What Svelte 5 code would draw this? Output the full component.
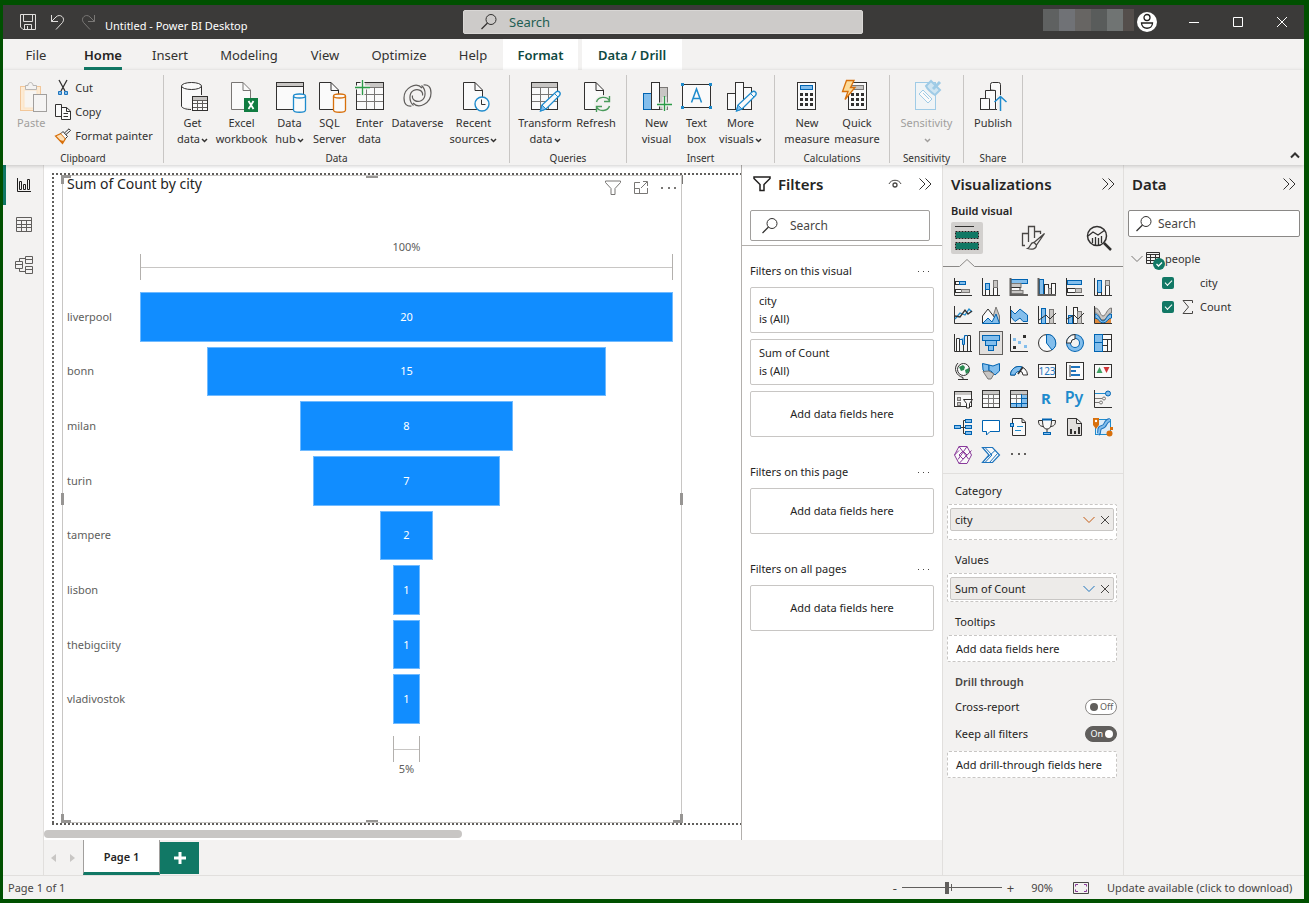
<script lang="ts">
  interface RibbonItem {
    icon: string;
    lines: string[];
    width: number;
    menu?: boolean;
    disabled?: boolean;
  }

  interface RibbonGroup {
    name: string;
    width: number;
    items: RibbonItem[];
  }

  const dark = "#323130";
  const blue = "#0063b1";
  const lightBlue = "#83beec";
  const gray = "#797775";
  const lightGray = "#c8c6c4";

  function box(x: number, y: number, w: number, h: number, fill = "#fafafa", stroke = dark): string {
    return `<rect x="${x}" y="${y}" width="${w}" height="${h}" fill="${fill}" stroke="${stroke}"/>`;
  }

  function line(d: string, stroke = dark, fill = "none", width = 1): string {
    return `<path d="${d}" stroke="${stroke}" fill="${fill}" stroke-width="${width}"/>`;
  }

  const page = (stroke = dark) =>
    line("M5.5 2.5H17L24.5 10V29.5H5.5Z", stroke, "#fafafa") + line("M17 2.5V10.5H24.5", stroke);
  const cylinder = (x: number, y: number, color: string) =>
    line(
      `M${x} ${y}V${y + 14}C${x} ${y + 17} ${x + 12} ${y + 17} ${x + 12} ${y + 14}V${y}`,
      color,
      "#fafafa",
      1.3,
    ) + `<ellipse cx="${x + 6}" cy="${y}" rx="6" ry="2" fill="#fafafa" stroke="${color}" stroke-width="1.3"/>`;
  const pencil =
    line("M11.5 31L13 25L27 12C29.5 10 32.5 13 30.5 15.5L17 29Z", "#1e8bcd", "#fafafa", 1.3) +
    line("M11.5 31L13 25L17 29Z", "#1e8bcd", lightBlue) +
    line("M25.5 13.5L29 17", "#1e8bcd");
  const axes = line("M.5 0V17.5H18");
  const keypad = (x: number) => {
    let dots = "";
    for (const row of [13, 18, 23]) {
      for (const col of [3, 8, 13]) {
        dots += `<rect x="${x + col}" y="${row}" width="3" height="3" fill="${dark}"/>`;
      }
    }
    return dots;
  };

  const ribbonIcons: Record<string, string> = {
    paste:
      box(5.5, 6.5, 20, 24, "#fdebd3", "#f2c79a") +
      box(9, 10, 13, 18, "#f7f5f2", "#fbe3c5") +
      line("M10.5 9.5V5.5H13C13 1.5 18 1.5 18 5.5H21.5V9.5Z", "#b8b6b4", "#f3f2f1") +
      box(18.5, 14.5, 13, 17, "#f5f4f3", "#a19f9d"),
    getData:
      `<rect x="5" y="6" width="19" height="21" fill="#fafafa"/>` +
      line("M4.5 6V26C4.5 28 9 29.5 14 29.5M24.5 6V15") +
      `<ellipse cx="14.5" cy="6" rx="10" ry="3.5" fill="#fafafa" stroke="${dark}"/>` +
      box(15.5, 16.5, 15, 14) + `<rect x="16" y="17" width="14" height="3" fill="${lightGray}"/>` +
      line("M16 20.5H30M16 23.5H30M16 27.5H30M20.5 20V30M25.5 20V30", "#605e5c"),
    excel:
      page(gray) + `<rect x="18" y="18" width="14" height="14" fill="#107c41"/>` +
      line("M22.5 21L27.5 29M27.5 21L22.5 29", "#fff", "none", 1.8),
    hub:
      box(2.5, 2.5, 27, 27) + `<rect x="3" y="3" width="26" height="4" fill="${lightGray}"/>` +
      line("M3 6.5H29") + cylinder(19.5, 16, "#1e8bcd"),
    sql: page() + cylinder(19.5, 16, "#d8700c"),
    enter:
      box(2.5, 2.5, 27, 27) + `<rect x="11" y="3" width="18" height="4" fill="${lightGray}"/>` +
      line("M3 14.5H29M3 21.5H29M12.5 7V29M20.5 7V29M3 7.5H29", gray) +
      line("M0 7.5H16M8.5 0V16", "#f3f2f1", "none", 4) +
      line("M1 7.5H16M8.5 0V15", "#2b9b47", "none", 1.3),
    dataverse: ["", ` transform="rotate(180 15.5 15.5)"`]
      .map(
        (turn) =>
          `<path${turn} d="M20 8C14 1.500 2 8 2 18C2 24.500 5 26.500 9.500 26M11.500 25.500C6.500 21 7 13 11.500 10.500C16 8 21.500 11 20.500 15.500" fill="none" stroke="#605e5c" stroke-width="1.2"/>`,
      )
      .join(""),
    recent:
      page() + `<circle cx="24" cy="24" r="7" fill="#fafafa" stroke="#1e8bcd" stroke-width="1.4"/>` +
      line("M23.5 19.5V24.5H27.5"),
    transform:
      box(2.5, 2.5, 26, 27) + `<rect x="3" y="3" width="25" height="4" fill="${lightGray}"/>` +
      line("M3 7.5H28M3 14.5H28M3 21.5H28M11.5 7V29M19.5 7V29", gray) + pencil,
    refresh:
      line("M4.5 2.5H16L23.5 10V29.5H4.5Z", dark, "#fafafa") + line("M16 2.5V10.5H23.5") +
      `<circle cx="23" cy="24" r="9" fill="#f3f2f1"/>` +
      line("M16.5 22C18 16.5 27 15.5 29.5 21M29.5 16V21.5H24M29.5 26C28 31.5 19 32 16.5 27M16.5 32V26.5H22", "#4a9b5c", "none", 1.4),
    newVisual:
      box(2.5, 13.5, 8, 16, lightBlue, blue) + box(18.5, 7.5, 8, 22, lightGray, gray) + box(10.5, 2.5, 8, 27) +
      line("M17 24.5H31M23.5 17V31", "#f3f2f1", "none", 4) + line("M16 24.5H31M23.5 16V31", "#2b9b47", "none", 1.3),
    textBox:
      box(1.5, 4.5, 28, 23) + line("M10.5 22.5L15.5 9L20.5 22.5M12 18.5H19", "#1e8bcd", "none", 1.5) +
      `<path d="M0 3h3v3h-3zM28 3h3v3h-3zM0 26h3v3h-3zM28 26h3v3h-3z" fill="#1e8bcd"/>`,
    moreVisuals: box(2.5, 13.5, 8, 16) + box(18.5, 7.5, 8, 22) + box(10.5, 2.5, 8, 27) + pencil,
    calc: box(6.5, 2.5, 18, 27) + box(9.5, 5.5, 12, 4, lightBlue, blue) + keypad(6),
    quick:
      box(7.5, 2.5, 18, 27) + box(10.5, 5.5, 12, 4, lightGray, gray) + keypad(7) +
      line("M5.5 .5H13L9.5 7.5H14L4 19.5L7 11.5H1.5Z", "#d8700c", "#fddc9a", 1.3),
    sensitivity:
      box(4.5, 2.5, 20, 27, "#f0f4f6", "#9fcbe6") + line("M8 14L12 10L21 19L17 23Z", "#9fcbe6", "#fafafa") +
      line("M12 13L18 19", "#9fcbe6") + line("M15 6L20 1L29 10L24 15C21 13 17 10 15 6Z", "#9fcbe6", "#cfe5f2", 2) +
      line("M22 9L29 2", "#9fcbe6", "none", 3),
    publish:
      box(3.5, 18.5, 9, 11) + line("M8.5 18V10.5H18.5V29.5H12.5V18.5", dark, "#fafafa") +
      line("M13.5 10V4.5Q13.5 2.5 15.5 2.5H21.5Q23.5 2.5 23.5 4.5V29.5H18.5V10.5Z", dark, "#fafafa") +
      `<rect x="20" y="15" width="7" height="17" fill="#f3f2f1"/>` +
      line("M23.5 31V17M17.5 22L23.5 16.5L29.5 22", "#1e8bcd", "none", 1.5),
  };

  const ribbon: RibbonGroup[] = [
    {
      name: "Data",
      width: 346,
      items: [
        { icon: "getData", lines: ["Get", "data"], width: 42, menu: true },
        { icon: "excel", lines: ["Excel", "workbook"], width: 56 },
        { icon: "hub", lines: ["Data", "hub"], width: 40, menu: true },
        { icon: "sql", lines: ["SQL", "Server"], width: 40 },
        { icon: "enter", lines: ["Enter", "data"], width: 40 },
        { icon: "dataverse", lines: ["Dataverse"], width: 56 },
        { icon: "recent", lines: ["Recent", "sources"], width: 56, menu: true },
      ],
    },
    {
      name: "Queries",
      width: 117,
      items: [
        { icon: "transform", lines: ["Transform", "data"], width: 56, menu: true },
        { icon: "refresh", lines: ["Refresh"], width: 46 },
      ],
    },
    {
      name: "Insert",
      width: 148,
      items: [
        { icon: "newVisual", lines: ["New", "visual"], width: 40 },
        { icon: "textBox", lines: ["Text", "box"], width: 40 },
        { icon: "moreVisuals", lines: ["More", "visuals"], width: 48, menu: true },
      ],
    },
    {
      name: "Calculations",
      width: 115,
      items: [
        { icon: "calc", lines: ["New", "measure"], width: 50 },
        { icon: "quick", lines: ["Quick", "measure"], width: 50 },
      ],
    },
    {
      name: "Sensitivity",
      width: 74,
      items: [{ icon: "sensitivity", lines: ["Sensitivity", ""], width: 58, menu: true, disabled: true }],
    },
    { name: "Share", width: 59, items: [{ icon: "publish", lines: ["Publish"], width: 44 }] },
  ];

  const tabs = [
    { label: "File", width: 66 },
    { label: "Home", width: 68 },
    { label: "Insert", width: 66 },
    { label: "Modeling", width: 92 },
    { label: "View", width: 60 },
    { label: "Optimize", width: 88 },
    { label: "Help", width: 60 },
    { label: "Format", width: 75, context: true },
    { label: "Data / Drill", width: 100, context: true },
  ];

  const grid = line("M1 4.5H17M1 8.5H17M1 13.5H17M6.5 4V17M11.5 4V17", gray);

  const visuals = [
    // bars and columns
    axes + box(1.5, 3.5, 4, 3) + box(5.5, 3.5, 6, 3, lightBlue, blue) + box(1.5, 11.5, 6, 3) + box(7.5, 11.5, 8, 3, lightGray, gray),
    axes + box(3.5, 11.5, 4, 6) + box(3.5, 5.5, 4, 6, lightBlue, blue) + box(11.5, 9.5, 4, 8) + box(11.5, 2.5, 4, 7, lightGray, gray),
    box(1, 1.5, 16.5, 4, lightBlue, blue) + box(1, 5.5, 10, 4, lightGray, gray) + box(1, 9.5, 9, 3) + box(1, 12.5, 12, 3, lightGray, gray) + line("M.5 0V17H18", "#605e5c", "none", 2),
    box(1.5, 1.5, 4, 15, lightBlue, blue) + box(6.5, 6.5, 4, 10) + box(10.5, 10.5, 3, 6, lightGray, gray) + box(13.5, 5.5, 4, 11) + line("M.5 0V17H18", "#605e5c", "none", 2),
    axes + box(1.5, 2.5, 14, 4, lightBlue, blue) + box(1.5, 10.5, 8, 4) + box(9.5, 10.5, 6, 4, lightGray, gray),
    axes + box(3.5, 2.5, 4, 12, lightBlue, blue) + line("M3.5 14V17M7.5 14V17") + box(11.5, 7.5, 4, 10) + box(11.5, 2.5, 4, 5, lightGray, gray),
    // lines and areas
    axes + line("M1 13L6 7L11 9L15 3L18 6", "#1e8bcd", "none", 1.3) + line("M1 10L6 11L11 4L14 8L18 5", dark, "none", 1.3),
    line("M9 17L14 1L17.5 10V17Z", gray, lightGray) + line("M.5 17V10L6 3L13 12V17Z", dark, "#fafafa") + line("M.5 17.5L6 12L10 16L14 8L17.5 17.5Z", blue, lightBlue),
    line("M1 4L5 8L10 3L17.5 9V15.5H13L10 12L5 15.5L1 11Z", blue, lightBlue) + axes,
    axes + box(3.5, 2.5, 4, 15, lightBlue, blue) + box(11.5, 3.5, 4, 14, lightGray, gray) + line("M1 14L8 9L12 13L18 7"),
    axes + box(2.5, 9.5, 4, 8, lightBlue, blue) + box(7.5, 1.5, 4, 16) + box(11.5, 5.5, 4, 12, lightGray, gray) + line("M1 13L8 9L12 13L18 7"),
    `<path d="M1 11H17V17H1Z" fill="#e08a3c"/>` + line("M1 2C6 2 6 10 9 10S13 2 17.5 2V7C13 7 13 14 9 14S6 7 1 7Z", gray, lightGray) + line("M1 8C5 8 6 15 9 15S13 8 17.5 8V12C14 12 13 17 9 17S5 12 1 12Z", blue, lightBlue) + axes,
    // ribbon, funnel, scatter and parts of a whole
    line("M2.5 17V4.5H5.5V17M9.5 17V10.5M13.5 17V1.5H16.5V17", dark, "#fafafa") + line("M5.5 5.5H8.5V10.5H10.5V1.5H13.5", blue, lightBlue) + axes,
    box(.5, 1.5, 17, 5, lightBlue, blue) + box(3.5, 6.5, 11, 5, lightBlue, blue) + box(6.5, 11.5, 5, 5, lightBlue, blue),
    axes + `<path d="M13 1h3v3h-3zM3 12h3v3h-3z" fill="${dark}"/><path d="M3 4h3v3h-3zM8 7h3v3h-3zM14 11h3v3h-3z" fill="${lightBlue}"/>`,
    `<circle cx="9" cy="9" r="8.5" fill="#fafafa" stroke="${dark}"/>` + line("M8.5 .5A8.5 8.5 0 0 1 14 16L8.5 9Z", blue, lightBlue),
    `<circle cx="9" cy="9" r="6.5" fill="none" stroke="${blue}" stroke-width="5"/><circle cx="9" cy="9" r="6.5" fill="none" stroke="${lightBlue}" stroke-width="3"/>` + line("M.5 9A8.5 8.5 0 0 1 9 .5V5A4 4 0 0 0 5 9Z", dark, "#fafafa"),
    box(.5, .5, 17, 17) + box(.5, .5, 8, 8, lightBlue, blue) + box(.5, 8.5, 8, 9, lightBlue, blue) + line("M8.5 5.5H17.5M13.5 5.5V17.5M8.5 11.5H13"),
    // maps, gauges and cards
    `<circle cx="9.5" cy="7.5" r="6" fill="#fafafa" stroke="${dark}"/><path d="M5 5l4-2 2 2-1 3-3 1zM11 8l4-2v4l-3 2z" fill="#2b8a52"/>` + line("M4 1C-1 6 2 14 9 15.5V17.5M4 17.5H14"),
    line("M.5 1.5L7 3V9L10 11L8 15L4 11L1 8Z", blue, lightBlue) + line("M7 3L11 4L17.5 1.5V9L13 13L9 9H7Z", blue, lightBlue) + line("M1 9.5L7 9L12 12L9 17H6Z", gray, lightGray),
    line("M.5 13A8.5 8.5 0 0 1 17.5 13H13A4 4 0 0 0 5 13Z", dark, "#fafafa") + line("M.5 13A8.5 8.5 0 0 1 12 5L9.5 9.5A4 4 0 0 0 5 13Z", blue, lightBlue) + line("M8 12L13 5", dark, "none", 1.5),
    box(.5, 2.5, 17, 13) + `<text x="9" y="13" text-anchor="middle" font-size="10" fill="#1e74bd">123</text>`,
    box(.5, .5, 17, 17) + line("M4 3V15") + line("M5 5H14M5 9H10M5 13H14", "#1e74bd", "none", 2),
    box(.5, 2.5, 17, 13) + `<path d="M2.500 11L5.500 5L8.500 11Z" fill="#3fa162"/><path d="M9.500 5H15.500L12.500 11Z" fill="#d13438"/>`,
    // slicer, tables and scripts
    box(.5, 1.5, 17, 15) + `<rect x="1" y="2" width="16" height="3" fill="${lightGray}"/>` + box(3.5, 7.5, 3, 3, lightGray, gray) + box(3.5, 12.5, 3, 3, lightGray, gray) + line("M9.5 9.5H18.5L15.5 13.5V18H12.5V13.5Z", dark, "#fafafa"),
    box(.5, .5, 17, 17) + `<rect x="1" y="1" width="16" height="3" fill="${lightGray}"/>` + grid,
    box(.5, .5, 17, 17) + `<rect x="1" y="1" width="16" height="3" fill="${lightGray}"/><path d="M12 4h5v13H1v-4h11z" fill="${lightBlue}"/>` + grid + line("M1 13.5H17M11.5 4V17M6.5 13V17M12 8.5H17", blue),
    `<text x="8" y="14" text-anchor="middle" font-size="15" font-weight="700" fill="#1e8bcd">R</text>`,
    `<text x="8" y="13" text-anchor="middle" font-size="16" font-weight="600" fill="#1e8bcd">Py</text>`,
    axes + line("M1 3.5H12", "#1e8bcd") + `<circle cx="14" cy="3.5" r="2.5" fill="${lightBlue}" stroke="${blue}"/>` + line("M1 8.5H8M1 12.5H5", gray) + `<circle cx="10" cy="8.5" r="1.5" fill="none" stroke="${gray}"/><circle cx="7" cy="12.5" r="1.5" fill="none" stroke="${gray}"/>`,
    // narrative and report visuals
    line("M6 9.5H9M9.5 2.5V15.5M9.5 2.5H12M9 9.5H12M9.5 15.5H12") + box(.5, 7.5, 6, 3, lightBlue, blue) + box(11.5, 1.5, 6, 3, lightBlue, blue) + box(11.5, 7.5, 6, 3, lightBlue, blue) + box(11.5, 13.5, 6, 3, lightBlue, blue),
    line("M.5 2.5H17.5V13.5H8L4.5 17V13.5H.5Z", blue, "#fff"),
    line("M2.5 5V.5H12L15.5 4V17.5H2.5V9M12 .5V4.5H15.5", dark, "#fafafa") + box(.5, 5.5, 3, 3, lightBlue, blue) + line("M7 8.5H13M5 12.5H11", "#1e8bcd"),
    line("M4 2.5H.5C.5 7 2 8 5 8.5M13 2.5H17.5C17.5 7 16 8 13 8.5") + line("M4.5 1.5H13.5C13.5 9 12 11 9 11S4.5 9 4.5 1.5M9 11V15", dark, "#fafafa") + line("M4 1.5H14", blue, "none", 2) + box(5.5, 14.5, 7, 2, lightBlue, blue),
    line("M1.5 .5H10.5L15.5 5V17.5H1.5ZM10.5 .5V5.5H15.5", dark, "#e1dfdd") + `<path d="M4 11h2v5h-2zM8 13h2v3h-2zM12 9h2v7h-2z" fill="${dark}"/>`,
    box(1.5, 1.5, 15, 15, "#dcecf8", "#1e8bcd") + line("M16 2C10 3 13 8 8 9S7 14 4 16", "#1e74bd", "none", 4) + line("M16 2C10 3 13 8 8 9S7 14 4 16", lightBlue, "none", 2) + `<path d="M-1 0h6v7l-3 4-3-4z" fill="#d8700c"/><circle cx="2" cy="3" r="1.200" fill="#fff"/><circle cx="15.500" cy="15.500" r="3" fill="#d8700c"/><rect x="16" y="9" width="3" height="3" fill="#d8700c"/>`,
    line("M5 .5H13L17.5 9L13 17.5H5L.5 9Z", "#8a3a9b", "#fafafa") + line("M5 .5L14.5 13M4 13.5L13 .5M.5 9L5 4.5M5 17.5L17.5 4.5M9 5L13 9L9 13L5 9Z", "#8a3a9b"),
    line("M.5 1.5H10.5L17.5 9L10.5 16.5H.5L7 9Z", "#1e74bd", "#fafafa", 1.2) + line("M3 1.5L10 9L3 16.5M5.5 11.5L13 4.5M7.5 16.5L15.5 7.5", "#1e74bd"),
    `<path d="M1 7h2v2h-2zM8 7h2v2h-2zM14 7h2v2h-2z" fill="#605e5c"/>`,
  ];

  const rows = [
    { city: "liverpool", count: 20 },
    { city: "bonn", count: 15 },
    { city: "milan", count: 8 },
    { city: "turin", count: 7 },
    { city: "tampere", count: 2 },
    { city: "lisbon", count: 1 },
    { city: "thebigciity", count: 1 },
    { city: "vladivostok", count: 1 },
  ];
  const largest = rows[0].count;
  const smallest = rows[rows.length - 1].count;

  const filterSections = [
    { title: "Filters on this visual", cards: ["city", "Sum of Count"] },
    { title: "Filters on this page", cards: [] },
    { title: "Filters on all pages", cards: [] },
  ];

  const redacted = ["#5f6161", "#707276", "#676563", "#595c5b", "#707473", "#544e4b"];

  let activeTab = $state("Home");
  let selectedVisual = $state(13);
  let crossReport = $state(false);
  let keepFilters = $state(true);
  let zoom = $state(45);
</script>

{#snippet chevron()}
  <svg class="chevron" width="7" height="5" viewBox="0 0 7 5" aria-hidden="true"
    ><path d="M1 1L3.5 3.5L6 1" fill="none" stroke="currentColor" stroke-width="1.5" /></svg
  >
{/snippet}

{#snippet collapse(label: string)}
  <button class="icon-button" aria-label={label}>
    <svg width="14" height="14" viewBox="0 0 14 14"
      ><path d="M1.5 1.5L7 7L1.5 12.5M7.5 1.5L13 7L7.5 12.5" fill="none" stroke="#323130" /></svg
    >
  </button>
{/snippet}

{#snippet magnifier()}
  <svg width="16" height="16" viewBox="0 0 16 16" aria-hidden="true"
    ><circle cx="10" cy="5.5" r="5" fill="none" stroke="currentColor" /><path
      d="M6.5 9L.5 15"
      stroke="currentColor"
      stroke-width="1.2"
    /></svg
  >
{/snippet}

{#snippet well(text: string, color: string)}
  <div class="pill">
    <span>{text}</span>
    <button class="icon-button" aria-label="{text} options">
      <svg width="12" height="8" viewBox="0 0 12 8"><path d="M.5 1L6 6.5L11.5 1" fill="none" stroke={color} /></svg>
    </button>
    <button class="icon-button" aria-label="Remove {text}">
      <svg width="10" height="10" viewBox="0 0 10 10"
        ><path d="M1 1L9 9M9 1L1 9" fill="none" stroke="#484644" /></svg
      >
    </button>
  </div>
{/snippet}

<div class="window">
  <header class="titlebar">
    <div class="quick-access">
      <button class="icon-button" aria-label="Save">
        <svg width="16" height="16" viewBox="0 0 16 16" fill="none" stroke="#e1dfdd"
          ><path d="M.5 .5H15.5V15.5H3L.5 13ZM3.5 1V7.5H12.5V1M4.5 15V10.5H11.5V15M7.5 12V15" /></svg
        >
      </button>
      <button class="icon-button" aria-label="Undo">
        <svg width="16" height="16" viewBox="0 0 16 16" fill="none" stroke="#e1dfdd"
          ><path d="M1.5 1V7.5H8M1.5 7.5L6 3C10 -1 16 4 12.5 8.5L6 15.5" /></svg
        >
      </button>
      <button class="icon-button" aria-label="Redo" disabled>
        <svg width="16" height="16" viewBox="0 0 16 16" fill="none" stroke="#797775"
          ><path d="M14.5 1V7.5H8M14.5 7.5L10 3C6 -1 0 4 3.5 8.5L10 15.5" /></svg
        >
      </button>
    </div>
    <h1>Untitled - Power BI Desktop</h1>
    <label class="title-search">
      {@render magnifier()}
      <input type="text" placeholder="Search" aria-label="Search" />
    </label>
    <div class="account">
      <div class="redacted">
        {#each redacted as color}
          <span style="background:{color}"></span>
        {/each}
      </div>
      <button class="icon-button" aria-label="Account">
        <svg width="20" height="20" viewBox="0 0 20 20"
          ><circle cx="10" cy="10" r="10" fill="#fff" /><circle
            cx="10"
            cy="5.5"
            r="3"
            fill="none"
            stroke="#201f1e"
            stroke-width="1.3"
          /><path d="M4.5 11H15.5C15.5 18 4.5 18 4.5 11Z" fill="none" stroke="#201f1e" stroke-width="1.3" /></svg
        >
      </button>
    </div>
    <div class="window-buttons">
      <button aria-label="Minimize"><svg width="10" height="10" viewBox="0 0 10 10"><path d="M0 5.5H10" /></svg></button>
      <button aria-label="Maximize"><svg width="10" height="10" viewBox="0 0 10 10"><path d="M.5 .5H9.5V9.5H.5Z" /></svg></button>
      <button aria-label="Close"><svg width="10" height="10" viewBox="0 0 10 10"><path d="M0 0L10 10M10 0L0 10" /></svg></button>
    </div>
  </header>

  <nav class="tabs">
    {#each tabs as tab}
      <button
        class:context={tab.context}
        class:active={tab.label === activeTab}
        style="width:{tab.width}px"
        onclick={() => (activeTab = tab.label)}><span>{tab.label}</span></button
      >
    {/each}
  </nav>

  <section class="ribbon">
    <div class="group clipboard">
      <div class="group-items">
        <button class="ribbon-button" disabled>
          <svg width="32" height="32" viewBox="0 0 32 32">{@html ribbonIcons.paste}</svg>
          <span>Paste</span>
        </button>
        <div class="clipboard-list">
          <button>
            <svg width="16" height="16" viewBox="0 0 16 16" fill="none"
              ><path d="M4 0L10 11M12 0L6 11" stroke="#323130" stroke-width="1.3" /><path
                d="M3.5 11.5h3v3h-3zM9.5 11.5h3v3h-3z"
                fill="#83beec"
                stroke="#1e74bd"
              /></svg
            >Cut
          </button>
          <button>
            <svg width="16" height="16" viewBox="0 0 16 16" fill="#fafafa" stroke="#323130"
              ><path d="M.5 .5H6.5V12.5H.5ZM6.5 3.5H11.5L15.5 7V15.5H6.5ZM11.5 3.5V7.5H15M8.5 9.5H13M8.5 12.5H13" /></svg
            >Copy
          </button>
          <button>
            <svg width="16" height="16" viewBox="0 0 16 16"
              ><path d="M.5 8L6 5.5L10.5 10.5L7.5 15.5Z" fill="#fce0b8" stroke="#d8700c" stroke-width="1.3" /><path
                d="M4 12L9 13L7.5 15.5Z"
                fill="#d8700c"
              /><path d="M6 5.5L8 3.5L12.5 8.5L10.5 10.5M9.5 5L14 .8L15.5 2.5L11 6.5" fill="#fafafa" stroke="#323130" /></svg
            >Format painter
          </button>
        </div>
      </div>
      <div class="group-name">Clipboard</div>
    </div>
    {#each ribbon as group}
      <div class="group" style="width:{group.width}px">
        <div class="group-items">
          {#each group.items as item}
            <button class="ribbon-button" style="width:{item.width}px" disabled={item.disabled}>
              <svg width="32" height="32" viewBox="0 0 32 32">{@html ribbonIcons[item.icon]}</svg>
              {#each item.lines as text, i}
                <span
                  >{text}{#if item.menu && i === item.lines.length - 1}{@render chevron()}{/if}</span
                >
              {/each}
            </button>
          {/each}
        </div>
        <div class="group-name">{group.name}</div>
      </div>
    {/each}
    <button class="icon-button ribbon-toggle" aria-label="Collapse the ribbon">
      <svg width="10" height="7" viewBox="0 0 10 7"><path d="M1 5.5L5 1.5L9 5.5" fill="none" stroke="#323130" stroke-width="2" /></svg>
    </button>
  </section>

  <div class="workspace">
    <nav class="rail">
      <button class="active" aria-label="Report view">
        <svg width="16" height="16" viewBox="0 0 16 16" fill="none" stroke="#201f1e"
          ><path d="M1.5 1V14.5H15M3.5 4.5H5.5V12.5H3.5ZM7.5 7.5H9.5V12.5H7.5ZM11.5 2.5H13.5V12.5H11.5Z" /></svg
        >
      </button>
      <button aria-label="Table view">
        <svg width="16" height="16" viewBox="0 0 16 16" fill="none" stroke="#605e5c"
          ><path d="M.5 .5H15.5V14.5H.5ZM0 3.5H16M0 7.5H16M0 10.5H16M5.5 4V14M10.5 4V14" /></svg
        >
      </button>
      <button aria-label="Model view">
        <svg width="18" height="18" viewBox="0 0 18 18" fill="none" stroke="#605e5c"
          ><path d="M.5 5.5H7.5V12.5H.5ZM.5 8.5H7.5M10.5 .5H17.5V7.5H10.5ZM10.5 3.5H17.5M10.5 10.5H17.5V17.5H10.5ZM10.5 13.5H17.5M4.5 5V2.5H10M4.5 13V15.5H10" /></svg
        >
      </button>
    </nav>

    <div class="center">
      <div class="report">
        <main class="canvas">
          <div class="sheet">
            <div class="visual">
              <span class="handle corner nw"></span>
              <span class="handle corner se"></span>
              <span class="handle corner sw"></span>
              <span class="handle corner ne"></span>
              <span class="handle top"></span>
              <span class="handle bottom"></span>
              <span class="handle left"></span>
              <span class="handle right"></span>
              <div class="visual-header">
                <h2>Sum of Count by city</h2>
                <button class="icon-button" aria-label="Filters on this visual">
                  <svg width="16" height="16" viewBox="0 0 16 16"
                    ><path d="M.5 1H15.5V2.5L10 8.5V14.5H6V8.5L.5 2.5Z" fill="none" stroke="#797775" /></svg
                  >
                </button>
                <button class="icon-button" aria-label="Focus mode">
                  <svg width="16" height="14" viewBox="0 0 16 14"
                    ><path d="M7 1.5H1.5V12.5H14.5V7M1.5 7.5H6.5V12.5M8 7L14 1M10 .5H14.5V5" fill="none" stroke="#797775" /></svg
                  >
                </button>
                <button class="icon-button" aria-label="More options">
                  <svg width="16" height="4" viewBox="0 0 16 4"
                    ><path d="M0 1h2v2h-2zM7 1h2v2h-2zM13 1h2v2h-2z" fill="#797775" /></svg
                  >
                </button>
              </div>
              <div class="funnel">
                <div class="percent">100%</div>
                <div class="bracket"></div>
                <div class="bars">
                  {#each rows as row}
                    <div class="bar-row">
                      <span class="bar-label">{row.city}</span>
                      <div class="bar-track">
                        <div class="bar" style="width:{(row.count / largest) * 100}%">{row.count}</div>
                      </div>
                    </div>
                  {/each}
                </div>
                <div class="bracket-track">
                  <div class="bracket" style="width:{(smallest / largest) * 100}%"></div>
                </div>
                <div class="percent">{(smallest / largest) * 100}%</div>
              </div>
            </div>
          </div>
          <div class="scrollbar"><span></span></div>
        </main>

        <aside class="filters">
          <div class="filters-top">
            <div class="pane-title">
              <svg width="18" height="16" viewBox="0 0 18 16" aria-hidden="true"
                ><path d="M1 1H17V2.5L11 8.5V14.5H7V8.5L1 2.5Z" fill="none" stroke="#201f1e" stroke-width="1.5" /></svg
              >
              <h2>Filters</h2>
              <button class="icon-button" aria-label="Hide filter pane in reading view">
                <svg width="14" height="10" viewBox="0 0 14 10" fill="none" stroke="#484644"
                  ><path d="M1 5C3 0 11 0 13 5" /><circle cx="7" cy="6" r="2" stroke-width="1.3" /></svg
                >
              </button>
              {@render collapse("Collapse filters")}
            </div>
            <label class="search-box">
              {@render magnifier()}
              <input type="text" placeholder="Search" aria-label="Search filters" />
            </label>
          </div>
          {#each filterSections as section}
            <section class="filter-section">
              <div class="filter-heading">
                <h3>{section.title}</h3>
                <button class="icon-button" aria-label="{section.title} options">
                  <svg width="12" height="1" viewBox="0 0 12 1"
                    ><path d="M0 0h1v1h-1zM5 0h1v1h-1zM10 0h1v1h-1z" fill="#484644" /></svg
                  >
                </button>
              </div>
              {#each section.cards as card}
                <div class="card"><span>{card}</span><span>is (All)</span></div>
              {/each}
              <div class="card empty">Add data fields here</div>
            </section>
          {/each}
        </aside>
      </div>

      <div class="page-tabs">
        <button class="step" aria-label="Previous page"><svg width="5" height="8" viewBox="0 0 5 8"><path d="M5 0V8L0 4Z" fill="#c8c6c4" /></svg></button>
        <button class="step" aria-label="Next page"><svg width="5" height="8" viewBox="0 0 5 8"><path d="M0 0V8L5 4Z" fill="#c8c6c4" /></svg></button>
        <button class="page-tab">Page 1</button>
        <button class="add-page" aria-label="New page">
          <svg width="12" height="12" viewBox="0 0 12 12"><path d="M6 0V12M0 6H12" stroke="#fff" stroke-width="3" /></svg>
        </button>
      </div>
    </div>

    <aside class="visualizations">
      <div class="pane-title">
        <h2>Visualizations</h2>
        {@render collapse("Collapse visualizations")}
      </div>
      <h3>Build visual</h3>
      <div class="modes">
        <button class="selected" aria-label="Build visual">
          <svg width="26" height="26" viewBox="0 0 26 26"
            ><path d="M1 1.5H20" stroke="#323130" /><path
              d="M1.5 6.5H24.5V13.5H1.5ZM1.5 17.5H24.5V24.5H1.5Z"
              fill="#117865"
              stroke="#d2d0ce"
            /><path
              d="M1.5 6.5H24.5V13.5H1.5ZM1.5 17.5H24.5V24.5H1.5Z"
              fill="none"
              stroke="#201f1e"
              stroke-dasharray="2 1"
            /></svg
          >
        </button>
        <button aria-label="Format visual">
          <svg width="26" height="26" viewBox="0 0 26 26" fill="none" stroke="#484644"
            ><path d="M5 20.5H2.5V8.5H8.5V17M8.5 8V1.5H14.5V13M14.5 6.5H20.5V9" stroke-width="1.3" /><path
              d="M24.5 8.5L14 17.5L16.5 20ZM14 17.5C10 17 11 22 7.5 23.5C12 25 16.5 24 16.5 20Z"
              stroke-width="1.3"
            /></svg
          >
        </button>
        <button aria-label="Analytics">
          <svg width="26" height="26" viewBox="0 0 26 26" fill="none" stroke="#323130"
            ><circle cx="11" cy="11" r="9.5" stroke-width="1.5" /><path
              d="M2 11L7 7L12 10L19 5M6.5 18V13M9.5 20V12M12.5 20V13M15.5 18V11"
              stroke-width="1.3"
            /><path d="M18 18L25 25" stroke-width="2.5" /></svg
          >
        </button>
      </div>
      <svg class="notch" width="100%" height="8" aria-hidden="true"
        ><path d="M0 7.5H16.5L24 .5L31.5 7.5H400" fill="none" stroke="#8a8886" /></svg
      >
      <div class="visual-grid">
        {#each visuals as icon, i}
          <button
            class:selected={i === selectedVisual}
            aria-label="Visual type {i + 1}"
            onclick={() => (selectedVisual = i)}
          >
            <svg width="18" height="18" viewBox="0 0 18 18">{@html icon}</svg>
          </button>
        {/each}
      </div>
      <div class="wells">
        <h4>Category</h4>
        <div class="well tall">{@render well("city", "#c55a11")}</div>
        <h4>Values</h4>
        <div class="well">{@render well("Sum of Count", "#1e74bd")}</div>
        <h4>Tooltips</h4>
        <div class="well hint">Add data fields here</div>
        <h4 class="drill">Drill through</h4>
        <label class="toggle-row">
          Cross-report
          <span class="toggle" class:on={crossReport}>
            <input type="checkbox" bind:checked={crossReport} />{crossReport ? "On" : "Off"}
          </span>
        </label>
        <label class="toggle-row">
          Keep all filters
          <span class="toggle" class:on={keepFilters}>
            <input type="checkbox" bind:checked={keepFilters} />{keepFilters ? "On" : "Off"}
          </span>
        </label>
        <div class="well hint">Add drill-through fields here</div>
      </div>
    </aside>

    <aside class="data">
      <div class="pane-title">
        <h2>Data</h2>
        {@render collapse("Collapse data")}
      </div>
      <label class="search-box">
        {@render magnifier()}
        <input type="text" placeholder="Search" aria-label="Search data" />
      </label>
      <div class="table-row">
        <svg width="12" height="8" viewBox="0 0 12 8"><path d="M.5 1L6 6.5L11.5 1" fill="none" stroke="#797775" /></svg>
        <svg width="16" height="20" viewBox="0 0 16 20"
          ><path d="M.5 3.500H13.500V14.500H.5ZM.5 5.500H13.500M.5 8.500H13.500M.5 11.500H13.500M4.500 5V14M9.500 5V14" fill="none" stroke="#323130" /><circle
            cx="13"
            cy="15"
            r="6"
            fill="#117865"
          /><path d="M10.5 15L12.5 17L16 13.5" fill="none" stroke="#fff" stroke-width="1.3" /></svg
        >
        <span>people</span>
      </div>
      <label class="field-row">
        <input type="checkbox" checked />
        <svg width="12" height="14" viewBox="0 0 12 14"></svg>
        city
      </label>
      <label class="field-row">
        <input type="checkbox" checked />
        <svg width="12" height="14" viewBox="0 0 12 14"
          ><path d="M10.5 3V.5H1L6.5 7L1 13.5H10.5V11" fill="none" stroke="#484644" /></svg
        >
        Count
      </label>
    </aside>
  </div>

  <footer class="status">
    <span>Page 1 of 1</span>
    <div class="zoom">
      <button aria-label="Zoom out">-</button>
      <input type="range" min="0" max="100" bind:value={zoom} aria-label="Zoom" />
      <button aria-label="Zoom in">+</button>
    </div>
    <span class="zoom-value">90%</span>
    <button class="icon-button" aria-label="Fit to page">
      <svg width="16" height="12" viewBox="0 0 16 12" fill="none"
        ><path d="M.5 .5H15.5V11.5H.5Z" stroke="#484644" /><path
          d="M5 2.5H2.5V4.5M11 2.5H13.5V4.5M5 9.5H2.5V7.5M11 9.5H13.5V7.5"
          stroke="#8a3a9b"
        /></svg
      >
    </button>
    <a href="#update">Update available (click to download)</a>
  </footer>
</div>

<style>
  :global(body) {
    margin: 0;
    background: #005000;
  }

  .window {
    box-sizing: border-box;
    height: 100vh;
    border: solid #005000;
    border-width: 5px 5px 4px 3px;
    display: flex;
    flex-direction: column;
    overflow: hidden;
    background: #f3f2f1;
    color: #323130;
    font-family: "Noto Sans", "Open Sans", sans-serif;
    font-size: 11px;
    line-height: 16px;
  }

  .window :global(*) {
    box-sizing: border-box;
  }

  button,
  input {
    font: inherit;
    color: inherit;
  }

  button {
    padding: 0;
    border: 0;
    background: none;
    white-space: nowrap;
  }

  svg {
    display: block;
    flex: none;
    overflow: visible;
  }

  h1,
  h2,
  h3,
  h4 {
    margin: 0;
    font-size: 11px;
    font-weight: 400;
  }

  .icon-button {
    display: flex;
    align-items: center;
    justify-content: center;
    flex: none;
  }

  /* title bar */
  .titlebar {
    display: flex;
    align-items: center;
    flex: none;
    height: 34px;
    background: #3b3a39;
    color: #fff;
  }

  .quick-access {
    display: flex;
    gap: 14px;
    width: 102px;
    padding-left: 17px;
  }

  h1 {
    flex: 1;
    padding-top: 8px;
  }

  .title-search {
    display: flex;
    align-items: center;
    gap: 12px;
    width: 400px;
    height: 24px;
    padding: 0 17px;
    border: 1px solid #d9d7d5;
    border-radius: 2px;
    background: #cdcbc9;
    color: #323130;
  }

  input[type="text"] {
    flex: 1;
    min-width: 0;
    padding: 0;
    border: 0;
    outline: 0;
    background: none;
  }

  .title-search input {
    font-size: 13px;
  }

  .title-search input::placeholder {
    color: #1f5e53;
    opacity: 1;
  }

  .account {
    display: flex;
    align-items: center;
    gap: 3px;
    padding-left: 180px;
  }

  .redacted {
    display: flex;
    height: 22px;
    margin-bottom: 4px;
  }

  .redacted span {
    width: 16px;
  }

  .redacted span:last-child {
    width: 11px;
  }

  .window-buttons {
    display: flex;
    padding-left: 15px;
  }

  .window-buttons button {
    display: flex;
    justify-content: center;
    width: 44px;
  }

  .window-buttons path {
    fill: none;
    stroke: #fff;
  }

  /* ribbon tabs */
  .tabs {
    display: flex;
    flex: none;
    height: 31px;
    font-size: 13px;
  }

  .tabs button {
    height: 31px;
  }

  .tabs span {
    display: inline-block;
    height: 31px;
    line-height: 32px;
  }

  .tabs .active span {
    border-bottom: 3px solid #117865;
    color: #252423;
    font-weight: 600;
  }

  .tabs .context {
    background: #fff;
    color: #0f4a42;
    font-weight: 600;
  }

  .tabs .context + .context {
    margin-left: 4px;
  }

  /* ribbon */
  .ribbon {
    position: relative;
    z-index: 1;
    display: flex;
    flex: none;
    height: 95px;
    padding: 5px 0 2px;
    background: #f3f2f1;
    box-shadow: 0 1px 4px rgba(0, 0, 0, 0.2);
  }

  .group {
    display: flex;
    flex-direction: column;
    justify-content: space-between;
    padding-top: 5px;
    border-right: 1px solid #c8c6c4;
  }

  .group-items {
    display: flex;
    justify-content: center;
  }

  .group-name {
    text-align: center;
    font-size: 10px;
    line-height: 10px;
  }

  .clipboard {
    width: 161px;
  }

  .ribbon-button {
    display: flex;
    flex-direction: column;
    align-items: center;
  }

  .ribbon-button svg {
    margin-bottom: 3px;
  }

  .ribbon-button span {
    display: flex;
    align-items: center;
    height: 16px;
  }

  .ribbon-button .chevron {
    margin: 2px 0 0 1px;
  }

  .ribbon-button:disabled {
    color: #a19f9d;
  }

  .clipboard .ribbon-button {
    width: 36px;
  }

  .clipboard-list {
    display: flex;
    flex-direction: column;
    margin-left: 6px;
  }

  .clipboard-list button {
    display: flex;
    align-items: center;
    gap: 4px;
    height: 24px;
  }

  .clipboard-list button:first-child {
    height: 16px;
    margin-bottom: 4px;
  }

  .ribbon-toggle {
    align-self: flex-end;
    margin: 0 4px 4px auto;
  }

  /* workspace */
  .workspace {
    display: flex;
    flex: 1;
    min-height: 0;
  }

  .rail {
    flex: none;
    width: 41px;
    border-right: 1px solid #e1dfdd;
  }

  .rail button {
    display: flex;
    align-items: center;
    justify-content: center;
    width: 38px;
    height: 40px;
    border-left: 3px solid transparent;
  }

  .rail .active {
    border-left-color: #117865;
  }

  .center {
    display: flex;
    flex: 1;
    flex-direction: column;
    min-width: 0;
  }

  .report {
    display: flex;
    flex: 1;
    min-height: 0;
    background: #fff;
  }

  .canvas {
    display: flex;
    flex: 1;
    flex-direction: column;
    min-width: 0;
    padding-top: 8px;
  }

  .sheet {
    display: flex;
    flex: 1;
    min-height: 0;
    margin-left: 8px;
    padding: 2px 59px 2px 10px;
    background:
      repeating-linear-gradient(90deg, #605e5c 0 2px, transparent 2px 4px) 0 0 / 100% 2px no-repeat,
      repeating-linear-gradient(90deg, #605e5c 0 2px, transparent 2px 4px) 0 100% / 100% 2px no-repeat,
      repeating-linear-gradient(#605e5c 0 2px, transparent 2px 4px) 0 0 / 2px 100% no-repeat;
  }

  .visual {
    position: relative;
    display: flex;
    flex: 1;
    flex-direction: column;
    border: 1px solid #c8c6c4;
  }

  .handle {
    position: absolute;
    width: 3px;
    height: 12px;
    background: #979593;
  }

  .corner {
    width: 10px;
    height: 9px;
    border: 0 solid #979593;
    background: none;
  }

  .nw {
    top: -1px;
    left: -2px;
    border-width: 3px 0 0 3px;
  }

  .ne {
    top: -1px;
    right: -2px;
    width: 1px;
    background: #797775;
  }

  .sw {
    bottom: -1px;
    left: -2px;
    border-width: 0 0 3px 3px;
  }

  .se {
    right: -2px;
    bottom: -1px;
    border-width: 0 3px 3px 0;
  }

  .top,
  .bottom {
    left: 50%;
    width: 12px;
    height: 2px;
    margin-left: -6px;
  }

  .top {
    top: 0;
  }

  .bottom {
    bottom: 0;
  }

  .left,
  .right {
    top: 50%;
    margin-top: -6px;
  }

  .left {
    left: -2px;
  }

  .right {
    right: -2px;
  }

  .visual-header {
    display: flex;
    align-items: center;
    gap: 12px;
    height: 24px;
    padding: 0 4px;
  }

  .visual-header h2 {
    flex: 1;
    align-self: flex-start;
    color: #252423;
    font-size: 14px;
  }

  .funnel {
    display: flex;
    flex: 1;
    flex-direction: column;
    padding: 40px 8px 46px 4px;
    color: #605e5c;
  }

  .percent {
    margin-left: 73px;
    text-align: center;
    line-height: 14px;
  }

  .bracket {
    height: 26px;
    border: solid #b3b0ad;
    border-width: 0 1px;
    background: linear-gradient(#c8c6c4, #c8c6c4) 0 50% / 100% 1px no-repeat;
  }

  .percent + .bracket,
  .bracket-track {
    margin-left: 73px;
  }

  .bracket-track {
    display: flex;
    justify-content: center;
  }

  .bars {
    display: flex;
    flex: 1;
    flex-direction: column;
    gap: 5px;
    margin: 12px 0;
  }

  .bar-row {
    display: flex;
    flex: 1;
  }

  .bar-label {
    align-self: center;
    width: 73px;
  }

  .bar-track {
    display: flex;
    flex: 1;
    justify-content: center;
  }

  .bar {
    display: flex;
    align-items: center;
    justify-content: center;
    border: 1px solid #70baff;
    background: #118dff;
    color: #fff;
  }

  .scrollbar {
    display: flex;
    align-items: center;
    height: 15px;
    padding-top: 3px;
  }

  .scrollbar span {
    width: 60%;
    height: 8px;
    border-radius: 4px;
    background: #c8c6c4;
  }

  /* panes */
  .pane-title {
    display: flex;
    align-items: center;
    height: 20px;
  }

  .pane-title h2 {
    flex: 1;
    color: #252423;
    font-size: 15px;
    font-weight: 600;
  }

  .search-box {
    display: flex;
    align-items: center;
    border: 1px solid #8a8886;
    border-radius: 2px;
    background: #fff;
    font-size: 12px;
  }

  .search-box input::placeholder {
    color: #484644;
    opacity: 1;
  }

  .filters {
    flex: none;
    width: 201px;
    border-left: 1px solid #b3b0ad;
    background: #fff;
  }

  .filters-top {
    height: 81px;
    padding: 9px 12px 0 8px;
    border-bottom: 1px solid #b3b0ad;
    margin-bottom: 15px;
  }

  .filters .pane-title {
    gap: 7px;
    padding-left: 3px;
    margin-right: -2px;
  }

  .filters .pane-title .icon-button:last-child {
    margin-left: 9px;
  }

  .filters .search-box {
    gap: 12px;
    height: 31px;
    margin-top: 16px;
    padding: 0 11px;
    border-color: #a19f9d;
  }

  .filter-section {
    display: flex;
    flex-direction: column;
    gap: 6px;
    margin-bottom: 25px;
    padding: 0 8px;
  }

  .filter-heading {
    display: flex;
    align-items: center;
    justify-content: space-between;
    height: 20px;
    padding-right: 4px;
    color: #252423;
  }

  .card {
    display: flex;
    flex-direction: column;
    justify-content: center;
    height: 46px;
    padding: 0 8px;
    border: 1px solid #c8c6c4;
    border-radius: 2px;
    color: #252423;
    line-height: 18px;
  }

  .empty {
    align-items: center;
  }

  .page-tabs {
    display: flex;
    flex: none;
    height: 35px;
  }

  .step {
    display: flex;
    align-items: center;
    justify-content: center;
    width: 19px;
  }

  .page-tab {
    width: 77px;
    margin-left: 1px;
    padding-top: 2px;
    border: solid #a19f9d;
    border-width: 0 1px;
    border-bottom: 3px solid #117865;
    background: #fff;
    color: #252423;
    font-weight: 600;
  }

  .add-page {
    display: flex;
    align-items: center;
    justify-content: center;
    width: 39px;
    margin: 2px 0 1px;
    background: #117865;
  }

  .visualizations,
  .data {
    flex: none;
    width: 181px;
    border-left: 1px solid #e1dfdd;
  }

  .visualizations .pane-title,
  .data .pane-title {
    margin-top: 9px;
    padding: 0 8px;
  }

  .visualizations h3 {
    height: 20px;
    margin-top: 7px;
    padding-left: 8px;
    color: #252423;
    font-weight: 600;
    line-height: 20px;
  }

  .modes {
    display: flex;
    justify-content: space-between;
    margin-top: 1px;
    padding: 0 8px;
  }

  .modes button {
    display: flex;
    align-items: center;
    justify-content: center;
    width: 32px;
    height: 32px;
    border-radius: 2px;
  }

  .modes .selected {
    background: #d2d0ce;
  }

  .notch {
    margin-top: 5px;
    overflow: hidden;
  }

  .visual-grid {
    display: grid;
    grid-template-columns: repeat(6, 28px);
    padding: 6px 6px 4px;
    border-bottom: 1px solid #e1dfdd;
  }

  .visual-grid button {
    display: flex;
    align-items: center;
    justify-content: center;
    height: 28px;
  }

  .visual-grid .selected {
    width: 24px;
    height: 24px;
    margin: 2px;
    border: 1px solid #605e5c;
    background: #e1dfdd;
  }

  .wells {
    padding: 7px 6px 0 4px;
    color: #252423;
  }

  .wells h4 {
    height: 20px;
    margin-bottom: 3px;
    padding-left: 8px;
    line-height: 20px;
  }

  .well {
    height: 29px;
    margin-bottom: 10px;
    padding: 3px 2px;
    border: 1px dashed #c8c6c4;
    border-radius: 2px;
    background: #fff;
  }

  .tall {
    height: 36px;
  }

  .hint {
    height: 27px;
    padding: 0 8px;
    line-height: 26px;
  }

  .pill {
    display: flex;
    align-items: center;
    gap: 5px;
    height: 23px;
    padding: 0 3px 0 4px;
    border: 1px solid #c8c6c4;
    border-radius: 2px;
    background: #edebe9;
  }

  .pill span {
    flex: 1;
  }

  .wells .drill {
    margin-bottom: 1px;
    color: #484644;
    font-weight: 600;
  }

  .toggle-row {
    display: flex;
    align-items: center;
    justify-content: space-between;
    height: 27px;
    padding-left: 8px;
  }

  .toggle {
    display: flex;
    align-items: center;
    gap: 2px;
    width: 32px;
    height: 16px;
    padding: 0 4px;
    border: 1px solid #8a8886;
    border-radius: 8px;
    background: #fff;
    color: #605e5c;
    font-size: 9px;
  }

  .toggle input {
    appearance: none;
    flex: none;
    width: 8px;
    height: 8px;
    margin: 0;
    border-radius: 50%;
    background: #605e5c;
  }

  .toggle.on {
    flex-direction: row-reverse;
    padding: 0 3px;
    border-color: #605e5c;
    background: #605e5c;
    color: #fff;
  }

  .toggle.on input {
    background: #fff;
  }

  .toggle-row + .hint {
    margin-top: 4px;
  }

  .data .search-box {
    gap: 6px;
    height: 27px;
    margin: 16px 4px 10px;
    padding: 0 7px;
  }

  .table-row,
  .field-row {
    display: flex;
    align-items: center;
    height: 24px;
  }

  .table-row {
    gap: 3px;
    padding-left: 7px;
  }

  .field-row {
    gap: 6px;
    padding-left: 38px;
  }

  .field-row svg {
    margin-left: 2px;
  }

  .field-row input {
    appearance: none;
    width: 12px;
    height: 12px;
    margin: 0;
    border-radius: 2px;
    background: #117865;
  }

  .field-row input:checked::before {
    content: "";
    display: block;
    width: 6px;
    height: 3px;
    margin: 3px 0 0 3px;
    border: solid #fff;
    border-width: 0 0 1px 1px;
    rotate: -45deg;
  }

  /* status bar */
  .status {
    display: flex;
    align-items: center;
    flex: none;
    height: 24px;
    padding: 0 5px;
    border-top: 1px solid #e1dfdd;
    color: #484644;
  }

  .zoom {
    display: flex;
    align-items: center;
    gap: 5px;
    margin-left: auto;
    font-size: 13px;
  }

  .zoom input {
    appearance: none;
    width: 100px;
    height: 12px;
    margin: 0;
    background:
      linear-gradient(#605e5c, #605e5c) 50% 50% / 1px 7px no-repeat,
      linear-gradient(#605e5c, #605e5c) 0 50% / 100% 1px no-repeat;
  }

  .zoom input::-webkit-slider-thumb {
    appearance: none;
    width: 4px;
    height: 12px;
    background: #605e5c;
  }

  .zoom-value {
    margin: 0 20px 0 17px;
  }

  .status a {
    min-width: 192px;
    margin-left: 18px;
    color: inherit;
    text-decoration: none;
  }
</style>
